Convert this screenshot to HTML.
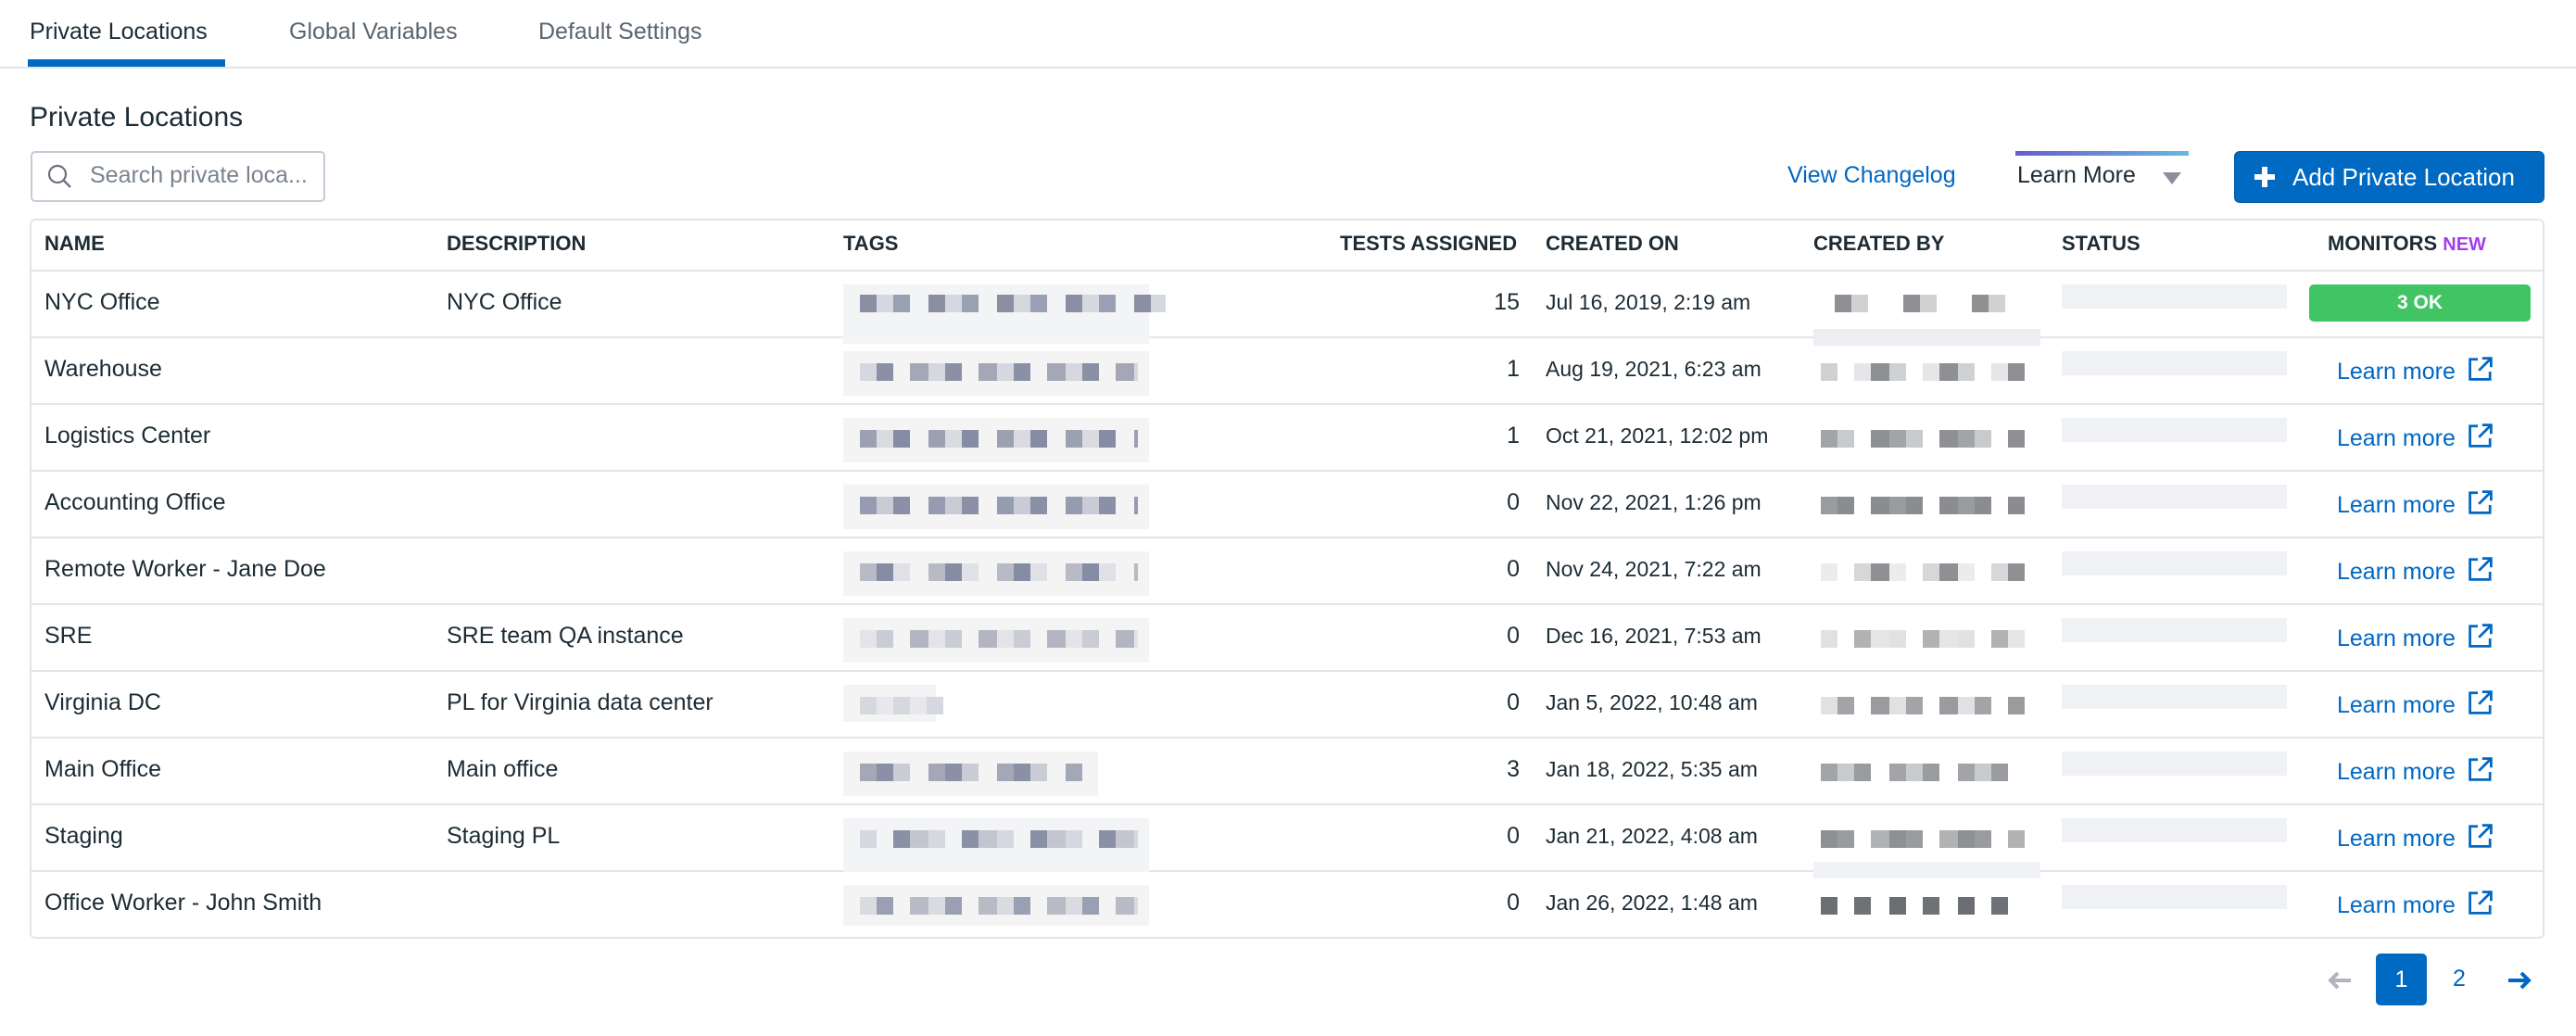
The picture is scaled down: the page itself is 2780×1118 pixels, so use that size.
<!DOCTYPE html>
<html><head><meta charset="utf-8"><style>
*{margin:0;padding:0;box-sizing:border-box}
body{width:2780px;height:1118px;background:#fff;font-family:"Liberation Sans",sans-serif;color:#1c2b34;position:relative;overflow:hidden}
.a{position:absolute;white-space:nowrap}
.tab{font-size:25px;top:20px;color:#5a6570}
.th{font-size:22px;font-weight:bold;top:250px;color:#1c2b34}
.c{font-size:25px;line-height:30px}
.lm{color:#0067c3;font-size:25px}
.ln{position:absolute;left:32px;width:2714px;height:2px;background:#e2e5ed}
.tg{position:absolute;left:910px;width:330px;height:48px;background:#f4f4f5}
.st{position:absolute;left:2225px;width:243px;height:26px;background:#f0f1f5}
</style></head><body>
<div class="a tab" style="left:32px;color:#1c2b34">Private Locations</div>
<div class="a tab" style="left:312px">Global Variables</div>
<div class="a tab" style="left:581px">Default Settings</div>
<div class="a" style="left:30px;top:64px;width:213px;height:8px;background:#0069c2"></div>
<div class="a" style="left:0;top:72px;width:2780px;height:2px;background:#e2e5ed"></div>
<div class="a" style="left:32px;top:110px;font-size:30px">Private Locations</div>
<div class="a" style="left:33px;top:163px;width:318px;height:55px;border:2px solid #c5cad6;border-radius:5px"></div>
<svg class="a" style="left:50px;top:176px" width="30" height="30" viewBox="0 0 30 30"><circle cx="12" cy="12" r="9" fill="none" stroke="#6b7380" stroke-width="2.2"/><line x1="18.5" y1="18.5" x2="26" y2="26" stroke="#6b7380" stroke-width="2.4"/></svg>
<div class="a" style="left:97px;top:175px;font-size:25px;color:#7a838e">Search private loca...</div>
<div class="a" style="left:1929px;top:175px;font-size:25px;color:#0067c3">View Changelog</div>
<div class="a" style="left:2175px;top:163px;width:187px;height:5px;background:linear-gradient(90deg,#6a5ccc,#66b8e0)"></div>
<div class="a" style="left:2177px;top:175px;font-size:25px">Learn More</div>
<div class="a" style="left:2334px;top:186px;width:0;height:0;border-left:10px solid transparent;border-right:10px solid transparent;border-top:13px solid #8a9099"></div>
<div class="a" style="left:2411px;top:163px;width:335px;height:56px;background:#0069c2;border-radius:6px;border:1px solid #0058a8"></div>
<div class="a" style="left:2433px;top:188px;width:22px;height:6px;background:#fff"></div>
<div class="a" style="left:2441px;top:180px;width:6px;height:22px;background:#fff"></div>
<div class="a" style="left:2474px;top:176px;font-size:26px;color:#fff">Add Private Location</div>
<div class="a" style="left:32px;top:236px;width:2714px;height:777px;border:2px solid #e2e5ed;border-radius:6px"></div>
<div class="ln" style="top:291px"></div>
<div class="a th" style="left:48px">NAME</div>
<div class="a th" style="left:482px">DESCRIPTION</div>
<div class="a th" style="left:910px">TAGS</div>
<div class="a th" style="left:1446px">TESTS ASSIGNED</div>
<div class="a th" style="left:1668px">CREATED ON</div>
<div class="a th" style="left:1957px">CREATED BY</div>
<div class="a th" style="left:2225px">STATUS</div>
<div class="a th" style="left:2512px">MONITORS <span style="color:#a33cf0;font-size:20px">NEW</span></div>

<svg class="a" style="left:2510px;top:1045px" width="30" height="26" viewBox="0 0 30 26"><path d="M27 13H5M13 5l-8 8 8 8" fill="none" stroke="#b0b5bd" stroke-width="4"/></svg>
<div class="a" style="left:2564px;top:1029px;width:55px;height:56px;background:#0069c2;border-radius:5px;color:#fff;font-size:25px;text-align:center;line-height:56px">1</div>
<div class="a" style="left:2647px;top:1042px;font-size:25px;color:#0067c3">2</div>
<svg class="a" style="left:2704px;top:1045px" width="30" height="26" viewBox="0 0 30 26"><path d="M3 13h22M17 5l8 8-8 8" fill="none" stroke="#0067c3" stroke-width="4"/></svg>

<div class="ln" style="top:363px"></div>
<div class="ln" style="top:435px"></div>
<div class="ln" style="top:507px"></div>
<div class="ln" style="top:579px"></div>
<div class="ln" style="top:651px"></div>
<div class="ln" style="top:723px"></div>
<div class="ln" style="top:795px"></div>
<div class="ln" style="top:867px"></div>
<div class="ln" style="top:939px"></div>

<div class="tg" style="top:307px;height:64px;background:#f3f4f6"></div>
<div class="tg" style="top:379px"></div>
<div class="tg" style="top:451px"></div>
<div class="tg" style="top:523px"></div>
<div class="tg" style="top:595px"></div>
<div class="tg" style="top:667px"></div>
<div class="tg" style="top:739px;width:100px;height:40px"></div>
<div class="tg" style="top:811px;width:275px"></div>
<div class="tg" style="top:883px;height:58px;background:#f3f4f6"></div>
<div class="tg" style="top:955px;height:44px"></div>

<div class="st" style="top:307px"></div>
<div class="st" style="top:379px"></div>
<div class="st" style="top:451px"></div>
<div class="st" style="top:523px"></div>
<div class="st" style="top:595px"></div>
<div class="st" style="top:667px"></div>
<div class="st" style="top:739px"></div>
<div class="st" style="top:811px"></div>
<div class="st" style="top:883px"></div>
<div class="st" style="top:955px"></div>

<div class="a" style="left:928px;top:318px;width:330px;height:19px;background:repeating-linear-gradient(90deg,#8a8fa3 0 18px,#d6d8df 18px 36px,#9aa0b4 36px 54px,#fff0 54px 74px)"></div>
<div class="a" style="left:928px;top:392px;width:300px;height:19px;background:repeating-linear-gradient(90deg,#d6d8df 0 18px,#8a91a6 18px 36px,#fff0 36px 54px,#a3a7b6 54px 74px)"></div>
<div class="a" style="left:928px;top:464px;width:300px;height:19px;background:repeating-linear-gradient(90deg,#9ca1b2 0 18px,#d9dbe1 18px 36px,#858ca3 36px 54px,#fff0 54px 74px)"></div>
<div class="a" style="left:928px;top:536px;width:300px;height:19px;background:repeating-linear-gradient(90deg,#959bb0 0 18px,#c9ccd4 18px 36px,#8a91a6 36px 54px,#fff0 54px 74px)"></div>
<div class="a" style="left:928px;top:608px;width:300px;height:19px;background:repeating-linear-gradient(90deg,#b8bbc6 0 18px,#858ca3 18px 36px,#e0e1e6 36px 54px,#fff0 54px 74px)"></div>
<div class="a" style="left:928px;top:680px;width:300px;height:19px;background:repeating-linear-gradient(90deg,#e3e4e8 0 18px,#c9ccd4 18px 36px,#fff0 36px 54px,#b3b6c2 54px 74px)"></div>
<div class="a" style="left:928px;top:752px;width:90px;height:19px;background:repeating-linear-gradient(90deg,#d6d8df 0 18px,#e7e8ec 18px 36px)"></div>
<div class="a" style="left:928px;top:824px;width:240px;height:19px;background:repeating-linear-gradient(90deg,#a3a7b6 0 18px,#8a91a6 18px 36px,#c9ccd4 36px 54px,#fff0 54px 74px)"></div>
<div class="a" style="left:928px;top:896px;width:300px;height:19px;background:repeating-linear-gradient(90deg,#d6d8df 0 18px,#fff0 18px 36px,#8a91a6 36px 54px,#c3c6d0 54px 74px)"></div>
<div class="a" style="left:928px;top:968px;width:300px;height:19px;background:repeating-linear-gradient(90deg,#d9dbe1 0 18px,#9aa0b4 18px 36px,#fff0 36px 54px,#b8bbc6 54px 74px)"></div>

<div class="a" style="left:1980px;top:318px;width:200px;height:19px;background:repeating-linear-gradient(90deg,#8e9093 0 18px,#d0d1d3 18px 36px,#fff0 36px 74px)"></div>
<div class="a" style="left:1965px;top:392px;width:220px;height:19px;background:repeating-linear-gradient(90deg,#d0d1d3 0 18px,#fff0 18px 36px,#e6e6e8 36px 54px,#8e9093 54px 74px)"></div>
<div class="a" style="left:1965px;top:464px;width:220px;height:19px;background:repeating-linear-gradient(90deg,#a2a4a7 0 18px,#c8cacb 18px 36px,#fff0 36px 54px,#8e9093 54px 74px)"></div>
<div class="a" style="left:1965px;top:536px;width:220px;height:19px;background:repeating-linear-gradient(90deg,#999b9e 0 18px,#8a8c8f 18px 36px,#fff0 36px 54px,#8a8c8f 54px 74px)"></div>
<div class="a" style="left:1965px;top:608px;width:220px;height:19px;background:repeating-linear-gradient(90deg,#ececed 0 18px,#fff0 18px 36px,#d6d7d8 36px 54px,#8e9093 54px 74px)"></div>
<div class="a" style="left:1965px;top:680px;width:220px;height:19px;background:repeating-linear-gradient(90deg,#e0e1e2 0 18px,#fff0 18px 36px,#b0b2b4 36px 54px,#e6e6e8 54px 74px)"></div>
<div class="a" style="left:1965px;top:752px;width:220px;height:19px;background:repeating-linear-gradient(90deg,#e0e1e2 0 18px,#a2a4a7 18px 36px,#fff0 36px 54px,#999b9e 54px 74px)"></div>
<div class="a" style="left:1965px;top:824px;width:220px;height:19px;background:repeating-linear-gradient(90deg,#a2a4a7 0 18px,#c8cacb 18px 36px,#999b9e 36px 54px,#fff0 54px 74px)"></div>
<div class="a" style="left:1965px;top:896px;width:220px;height:19px;background:repeating-linear-gradient(90deg,#8e9093 0 18px,#999b9e 18px 36px,#fff0 36px 54px,#b0b2b4 54px 74px)"></div>
<div class="a" style="left:1965px;top:968px;width:220px;height:19px;background:repeating-linear-gradient(90deg,#6b6e72 0 18px,#fff0 18px 36px,#6e7175 36px 54px,#fff0 54px 74px)"></div>
<div class="a" style="left:1957px;top:355px;width:245px;height:18px;background:#eceef2"></div>
<div class="a" style="left:1957px;top:930px;width:245px;height:18px;background:#f1f2f5"></div>

<div class="a c" style="left:48px;top:311px">NYC Office</div><div class="a c" style="left:482px;top:311px">NYC Office</div>
<div class="a c" style="left:48px;top:383px">Warehouse</div>
<div class="a c" style="left:48px;top:455px">Logistics Center</div>
<div class="a c" style="left:48px;top:527px">Accounting Office</div>
<div class="a c" style="left:48px;top:599px">Remote Worker - Jane Doe</div>
<div class="a c" style="left:48px;top:671px">SRE</div><div class="a c" style="left:482px;top:671px">SRE team QA instance</div>
<div class="a c" style="left:48px;top:743px">Virginia DC</div><div class="a c" style="left:482px;top:743px">PL for Virginia data center</div>
<div class="a c" style="left:48px;top:815px">Main Office</div><div class="a c" style="left:482px;top:815px">Main office</div>
<div class="a c" style="left:48px;top:887px">Staging</div><div class="a c" style="left:482px;top:887px">Staging PL</div>
<div class="a c" style="left:48px;top:959px">Office Worker - John Smith</div>

<div class="a c" style="right:1140px;top:311px">15</div>
<div class="a c" style="right:1140px;top:383px">1</div>
<div class="a c" style="right:1140px;top:455px">1</div>
<div class="a c" style="right:1140px;top:527px">0</div>
<div class="a c" style="right:1140px;top:599px">0</div>
<div class="a c" style="right:1140px;top:671px">0</div>
<div class="a c" style="right:1140px;top:743px">0</div>
<div class="a c" style="right:1140px;top:815px">3</div>
<div class="a c" style="right:1140px;top:887px">0</div>
<div class="a c" style="right:1140px;top:959px">0</div>

<div class="a c" style="left:1668px;top:311px;font-size:23px">Jul 16, 2019, 2:19 am</div>
<div class="a c" style="left:1668px;top:383px;font-size:23px">Aug 19, 2021, 6:23 am</div>
<div class="a c" style="left:1668px;top:455px;font-size:23px">Oct 21, 2021, 12:02 pm</div>
<div class="a c" style="left:1668px;top:527px;font-size:23px">Nov 22, 2021, 1:26 pm</div>
<div class="a c" style="left:1668px;top:599px;font-size:23px">Nov 24, 2021, 7:22 am</div>
<div class="a c" style="left:1668px;top:671px;font-size:23px">Dec 16, 2021, 7:53 am</div>
<div class="a c" style="left:1668px;top:743px;font-size:23px">Jan 5, 2022, 10:48 am</div>
<div class="a c" style="left:1668px;top:815px;font-size:23px">Jan 18, 2022, 5:35 am</div>
<div class="a c" style="left:1668px;top:887px;font-size:23px">Jan 21, 2022, 4:08 am</div>
<div class="a c" style="left:1668px;top:959px;font-size:23px">Jan 26, 2022, 1:48 am</div>

<div class="a" style="left:2492px;top:307px;width:239px;height:40px;background:#41c464;border-radius:5px;color:#fff;font-weight:bold;font-size:21px;text-align:center;line-height:40px">3 OK</div>

<svg width="0" height="0" style="position:absolute"><defs><g id="ex"><path d="M10 4H3v18h18v-7" fill="none" stroke="#0067c3" stroke-width="2.3"/><path d="M14 3h8v8M22 3L11 14" fill="none" stroke="#0067c3" stroke-width="2.3"/></g></defs></svg>
<div class="a lm" style="left:2522px;top:383px">Learn more<svg width="30" height="30" viewBox="0 0 25 25" style="vertical-align:-4px;margin-left:12px"><use href="#ex"/></svg></div>
<div class="a lm" style="left:2522px;top:455px">Learn more<svg width="30" height="30" viewBox="0 0 25 25" style="vertical-align:-4px;margin-left:12px"><use href="#ex"/></svg></div>
<div class="a lm" style="left:2522px;top:527px">Learn more<svg width="30" height="30" viewBox="0 0 25 25" style="vertical-align:-4px;margin-left:12px"><use href="#ex"/></svg></div>
<div class="a lm" style="left:2522px;top:599px">Learn more<svg width="30" height="30" viewBox="0 0 25 25" style="vertical-align:-4px;margin-left:12px"><use href="#ex"/></svg></div>
<div class="a lm" style="left:2522px;top:671px">Learn more<svg width="30" height="30" viewBox="0 0 25 25" style="vertical-align:-4px;margin-left:12px"><use href="#ex"/></svg></div>
<div class="a lm" style="left:2522px;top:743px">Learn more<svg width="30" height="30" viewBox="0 0 25 25" style="vertical-align:-4px;margin-left:12px"><use href="#ex"/></svg></div>
<div class="a lm" style="left:2522px;top:815px">Learn more<svg width="30" height="30" viewBox="0 0 25 25" style="vertical-align:-4px;margin-left:12px"><use href="#ex"/></svg></div>
<div class="a lm" style="left:2522px;top:887px">Learn more<svg width="30" height="30" viewBox="0 0 25 25" style="vertical-align:-4px;margin-left:12px"><use href="#ex"/></svg></div>
<div class="a lm" style="left:2522px;top:959px">Learn more<svg width="30" height="30" viewBox="0 0 25 25" style="vertical-align:-4px;margin-left:12px"><use href="#ex"/></svg></div>
</body></html>
